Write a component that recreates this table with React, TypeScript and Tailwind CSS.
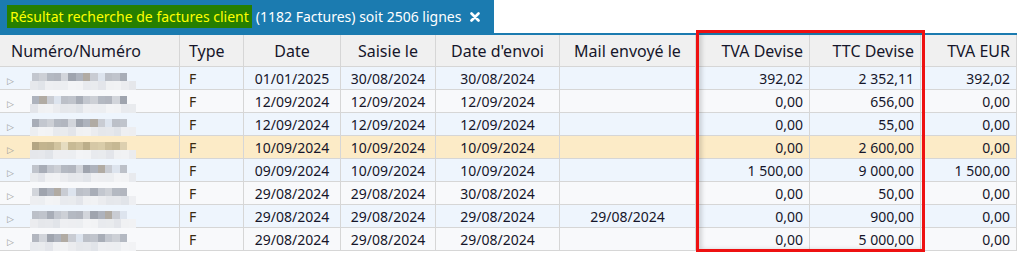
const cols = 'grid grid-cols-[180px_64px_97px_95px_124px_136px_114px_111px_1fr]';

type Row = {
  date: string;
  saisie: string;
  envoi: string;
  mail: string;
  tva: string;
  ttc: string;
  eur: string;
};

const rows: Row[] = [
  { date: '01/01/2025', saisie: '30/08/2024', envoi: '30/08/2024', mail: '', tva: '392,02', ttc: '2 352,11', eur: '392,02' },
  { date: '12/09/2024', saisie: '12/09/2024', envoi: '12/09/2024', mail: '', tva: '0,00', ttc: '656,00', eur: '0,00' },
  { date: '12/09/2024', saisie: '12/09/2024', envoi: '12/09/2024', mail: '', tva: '0,00', ttc: '55,00', eur: '0,00' },
  { date: '10/09/2024', saisie: '10/09/2024', envoi: '10/09/2024', mail: '', tva: '0,00', ttc: '2 600,00', eur: '0,00' },
  { date: '09/09/2024', saisie: '10/09/2024', envoi: '10/09/2024', mail: '', tva: '1 500,00', ttc: '9 000,00', eur: '1 500,00' },
  { date: '29/08/2024', saisie: '29/08/2024', envoi: '30/08/2024', mail: '', tva: '0,00', ttc: '50,00', eur: '0,00' },
  { date: '29/08/2024', saisie: '29/08/2024', envoi: '29/08/2024', mail: '29/08/2024', tva: '0,00', ttc: '900,00', eur: '0,00' },
  { date: '29/08/2024', saisie: '29/08/2024', envoi: '29/08/2024', mail: '', tva: '0,00', ttc: '5 000,00', eur: '0,00' },
];

// blurred invoice number, drawn as a mosaic
const dark = ['#c3c7cf', '#b4b9c2', '#d2d5db', '#aeb3bd', '#c9ccd3', '#bcc0c8', '#a8adb7', '#cdd0d6', '#b2b6bf', '#9fa4ae', '#b1aba3', '#dde4ee', '#c0c4cc'];
const darkWarm = ['#d6c8a6', '#cbbd99', '#ddd0b0', '#c3b48f', '#d2c4a0', '#c8ba95', '#bcae8a', '#d9cca9', '#c6b893', '#b4a684', '#c0b28e', '#e6dcc0', '#cfc19d'];
const light = ['#e6e8ec', '#edeef1', '#f2f3f5', '#e3e5ea', '#ebecef', '#e1e4e9', '#eceef1', '#e8eaee', '#f0f1f3', '#e5e7eb', '#eeeff2', '#f3f4f6', '#e9ebee', '#f1f2f4'];

const Mosaic = ({ seed, warm }: { seed: number; warm?: boolean }) => {
  const top = warm ? darkWarm : dark;
  return (
    <div className="absolute left-[32px] top-[6px] flex flex-col">
      <div className="flex">
        {top.map((_, i) => (
          <div key={i} className="h-[8px] w-[7.3px]" style={{ background: top[(i * 7 + seed) % top.length] }} />
        ))}
      </div>
      <div className="flex -ml-[2px]">
        {light.map((_, i) => (
          <div key={i} className="h-[9px] w-[7.6px]" style={{ background: light[(i * 5 + seed) % light.length] }} />
        ))}
      </div>
    </div>
  );
};

const cell = 'border-r border-b border-[#d6d6d6] px-[6px] flex items-center';

export default function App() {
  return (
    <div className="relative w-[1017px] h-[254px] overflow-hidden bg-white font-['Noto_Sans',sans-serif] text-[14px] text-[#16162a]">
      {/* tab */}
      <div className="flex h-[33px]">
        <div className="flex items-center bg-[#1b7bb0] pl-[7px] pr-[14px] text-white">
          <span className="bg-[#267f00] px-[3px] text-[#ffff00] leading-[23px]">Résultat recherche de factures client</span>
          <span className="ml-[4px]">(1182 Factures) soit 2506 lignes</span>
          <svg className="ml-[9px]" width="10" height="10" viewBox="0 0 10 10">
            <path d="M1.5 1.5 L8.5 8.5 M8.5 1.5 L1.5 8.5" stroke="white" strokeWidth="2.6" strokeLinecap="round" />
          </svg>
        </div>
      </div>
      <div className="h-[2px] bg-[#1b7bb0]" />

      {/* header */}
      <div className={`${cols} h-[32px] bg-[#f0f0f0] text-[16px]`}>
        <div className={`${cell} pl-[11px]`}>Numéro/Numéro</div>
        <div className={`${cell} pl-[9px]`}>Type</div>
        <div className={`${cell} justify-center`}>Date</div>
        <div className={`${cell} justify-center`}>Saisie le</div>
        <div className={`${cell} justify-center`}>Date d'envoi</div>
        <div className={`${cell} justify-center`}>Mail envoyé le</div>
        <div className={`${cell} justify-end`}>TVA Devise</div>
        <div className={`${cell} justify-end`}>TTC Devise</div>
        <div className={`${cell} justify-end`}>TVA EUR</div>
      </div>

      {rows.map((r, i) => {
        const bg = i === 3 ? 'bg-[#fcebc7]' : i % 2 === 0 ? 'bg-[#eef5fd]' : 'bg-[#f8f9fb]';
        return (
          <div key={i} className={`${cols} h-[23px] ${bg}`}>
            <div className={`${cell} relative pl-[7px]`}>
              <span className="text-[9px] text-[#9a9a9a] mt-[6px]">▷</span>
              <Mosaic seed={i * 3} warm={i === 3} />
            </div>
            <div className={`${cell} pl-[9px] text-[#3a2a10]`}>F</div>
            <div className={`${cell} justify-center`}>{r.date}</div>
            <div className={`${cell} justify-center`}>{r.saisie}</div>
            <div className={`${cell} justify-center`}>{r.envoi}</div>
            <div className={`${cell} justify-center`}>{r.mail}</div>
            <div className={`${cell} justify-end px-[4px]`}>{r.tva}</div>
            <div className={`${cell} justify-end px-[4px]`}>{r.ttc}</div>
            <div className={`${cell} justify-end px-[3px]`}>{r.eur}</div>
          </div>
        );
      })}

      {/* highlight frame */}
      <div className="absolute left-[696px] top-[30px] w-[229px] h-[222px] border-[3px] border-[#ee1111] shadow-[inset_3px_0_4px_rgba(0,0,0,0.15)]" />
    </div>
  );
}
